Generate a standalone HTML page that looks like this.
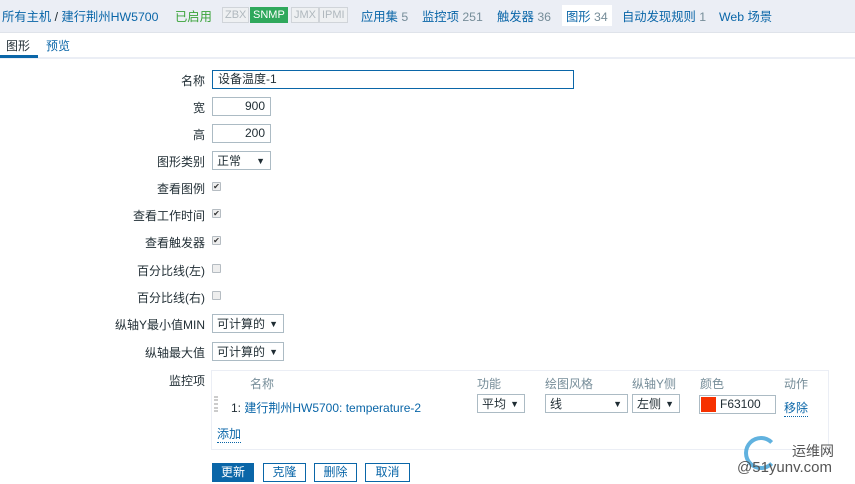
<!DOCTYPE html>
<html><head><meta charset="utf-8"><style>
*{box-sizing:border-box;margin:0;padding:0}
body{width:855px;height:484px;overflow:hidden;background:#fff;font-family:"Liberation Sans","Noto Sans CJK SC",sans-serif;font-size:12px;color:#1f2c33;position:relative}
.top{position:absolute;left:0;top:0;width:855px;height:33px;background:#ebeef5;border-bottom:1px solid #dfe3ea}
.a{position:absolute;top:7px;color:#0a66a8;white-space:nowrap;font-size:12.3px}
.g{color:#768d99}
.tag{position:absolute;top:7px;height:16px;line-height:14px;font-size:11px;border:1px solid #d0d4d9;color:#b0b8be;padding:0 2px;background:#eef0f2}
.tabs{position:absolute;top:33px;left:0;width:855px;height:26px;border-bottom:2px solid #ebeef5}
.lab{position:absolute;right:650px;white-space:nowrap;text-align:right}
.in{position:absolute;left:212px;height:19px;border:1px solid #acbbc4;background:#fff;padding:1px 5px;line-height:15px}
.sel{position:absolute;height:19px;border:1px solid #acbbc4;background:#fff;padding:2px 4px;line-height:14px}
.sel:after{content:"▼";position:absolute;right:5px;top:2px;font-size:9px}
.cb{position:absolute;left:212px;width:9px;height:9px;border:1px solid #b5bcc2;background:#eee;border-radius:1px;font-size:8px;line-height:8px;text-align:center;color:#333}
.btn{position:absolute;top:463px;height:19px;border:1px solid #0a66a8;color:#0a66a8;background:#fff;text-align:center;line-height:17px}
.h{position:absolute;top:375px;color:#768d99}
</style></head><body>
<div class="top">
<span class="a" style="left:2px">所有主机 <span style="color:#1f2c33">/</span> 建行荆州HW5700</span>
<span class="a" style="left:175px;color:#3aa33a">已启用</span>
<span class="tag" style="left:222px">ZBX</span>
<span class="tag" style="left:250px;background:#2fa85c;color:#fff;border-color:#2fa85c">SNMP</span>
<span class="tag" style="left:291px">JMX</span>
<span class="tag" style="left:319px">IPMI</span>
<span class="a" style="left:361px">应用集 <span class="g">5</span></span>
<span class="a" style="left:422px">监控项 <span class="g">251</span></span>
<span class="a" style="left:497px">触发器 <span class="g">36</span></span>
<span style="position:absolute;left:562px;top:5px;width:50px;height:21px;background:#fff"></span>
<span class="a" style="left:566px">图形 <span class="g">34</span></span>
<span class="a" style="left:622px">自动发现规则 <span class="g">1</span></span>
<span class="a" style="left:719px">Web 场景</span>
</div>
<div class="tabs">
<span style="position:absolute;left:6px;top:4px">图形</span>
<span style="position:absolute;left:0;top:22px;width:38px;height:3px;background:#0a66a8"></span>
<span style="position:absolute;left:46px;top:4px;color:#0a66a8">预览</span>
</div>
<div class="lab" style="top:72px">名称</div>
<div class="in" style="top:70px;width:362px;border-color:#0a66a8">设备温度-1</div>
<div class="lab" style="top:99px">宽</div>
<div class="in" style="top:97px;width:59px;text-align:right">900</div>
<div class="lab" style="top:126px">高</div>
<div class="in" style="top:124px;width:59px;text-align:right">200</div>
<div class="lab" style="top:153px">图形类别</div>
<div class="sel" style="left:212px;top:151px;width:59px">正常</div>
<div class="lab" style="top:180px">查看图例</div><div class="cb" style="top:182px">✔</div>
<div class="lab" style="top:207px">查看工作时间</div><div class="cb" style="top:209px">✔</div>
<div class="lab" style="top:234px">查看触发器</div><div class="cb" style="top:236px">✔</div>
<div class="lab" style="top:262px">百分比线(左)</div><div class="cb" style="top:264px"></div>
<div class="lab" style="top:289px">百分比线(右)</div><div class="cb" style="top:291px"></div>
<div class="lab" style="top:316px">纵轴Y最小值MIN</div>
<div class="sel" style="left:212px;top:314px;width:72px">可计算的</div>
<div class="lab" style="top:344px">纵轴最大值</div>
<div class="sel" style="left:212px;top:342px;width:72px">可计算的</div>
<div class="lab" style="top:372px">监控项</div>
<div style="position:absolute;left:211px;top:370px;width:618px;height:80px;border:1px solid #ebeef5"></div>
<span class="h" style="left:250px">名称</span>
<span class="h" style="left:477px">功能</span>
<span class="h" style="left:545px">绘图风格</span>
<span class="h" style="left:632px">纵轴Y侧</span>
<span class="h" style="left:700px">颜色</span>
<span class="h" style="left:784px">动作</span>
<span style="position:absolute;left:214px;top:396px;width:4px;height:16px;border-left:2px dotted #ccc;border-right:2px dotted #ccc"></span>
<span style="position:absolute;left:231px;top:399px">1: <span style="color:#0a66a8">建行荆州HW5700: temperature-2</span></span>
<div class="sel" style="left:477px;top:394px;width:48px">平均</div>
<div class="sel" style="left:545px;top:394px;width:83px">线</div>
<div class="sel" style="left:632px;top:394px;width:48px">左侧</div>
<div class="in" style="left:699px;top:395px;width:77px;padding-left:20px">F63100</div>
<span style="position:absolute;left:701px;top:397px;width:15px;height:15px;background:#f63100"></span>
<span style="position:absolute;left:784px;top:399px;color:#0a66a8;border-bottom:1px dotted #0a66a8">移除</span>
<span style="position:absolute;left:217px;top:425px;color:#0a66a8;border-bottom:1px dotted #0a66a8">添加</span>
<div class="btn" style="left:212px;width:42px;background:#0a66a8;color:#fff">更新</div>
<div class="btn" style="left:263px;width:43px">克隆</div>
<div class="btn" style="left:314px;width:43px">删除</div>
<div class="btn" style="left:365px;width:45px">取消</div>
<div style="position:absolute;left:744px;top:436px;width:34px;height:34px;border:4px solid #3a9fd8;border-radius:50%;border-right-color:transparent;opacity:.8"></div>
<span style="position:absolute;left:792px;top:441px;font-size:14px;color:#555">运维网</span>
<span style="position:absolute;left:737px;top:459px;font-size:15px;color:#555">@51yunv.com</span>
</body></html>
